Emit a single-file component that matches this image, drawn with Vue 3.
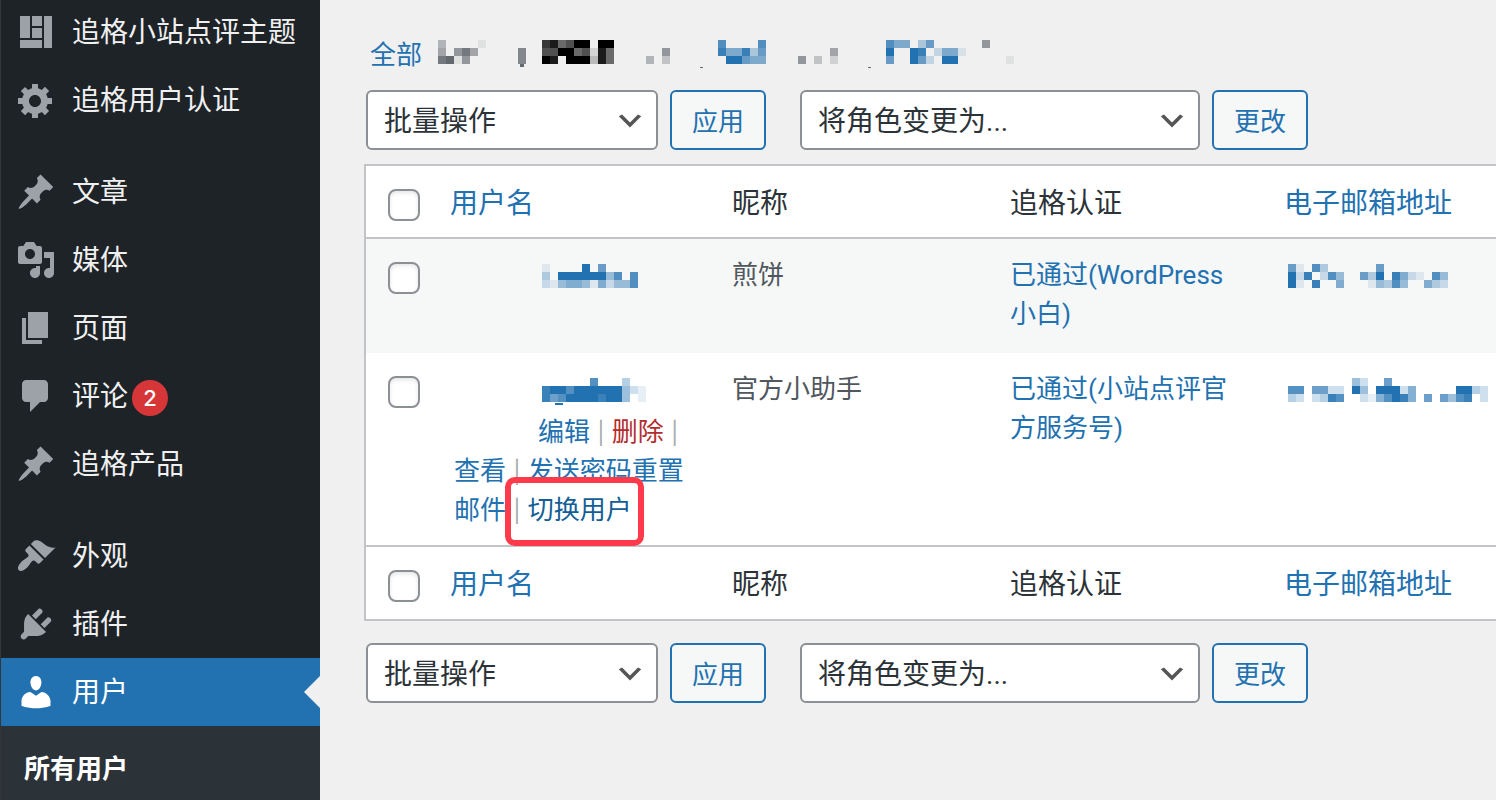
<template>
  <div class="admin">
    <nav class="sidebar" aria-label="主菜单">
      <ul class="menu">
        <li
          v-for="item in menu"
          :key="item.label"
          :class="{ 'group-start': item.groupStart, current: item.current }"
        >
          <a href="#" class="menu-link">
            <svg class="menu-icon" viewBox="0 0 20 20" aria-hidden="true">
              <path :d="item.icon" />
            </svg>
            <span class="menu-name">{{ item.label }}</span>
            <span v-if="item.count" class="badge">{{ item.count }}</span>
          </a>
        </li>
      </ul>
      <ul class="submenu">
        <li><a href="#">所有用户</a></li>
      </ul>
    </nav>

    <main class="content">
      <ul class="filters">
        <li><a href="#">全部</a></li>
        <li v-for="(f, i) in filters" :key="i" :class="['filter-mask', f.tone]">
          <Mosaic :rows="f.rows" :marks="f.marks" />
        </li>
      </ul>

      <div class="toolbar">
        <div class="actions">
          <div class="select-wrap bulk">
            <select v-model="bulkAction" aria-label="批量操作">
              <option value="">批量操作</option>
              <option value="delete">删除</option>
            </select>
            <svg viewBox="0 0 20 20" aria-hidden="true"><path :d="chevron" /></svg>
          </div>
          <button type="button">应用</button>
        </div>
        <div class="actions">
          <div class="select-wrap role">
            <select v-model="newRole" aria-label="将角色变更为">
              <option value="">将角色变更为...</option>
              <option value="subscriber">订阅者</option>
            </select>
            <svg viewBox="0 0 20 20" aria-hidden="true"><path :d="chevron" /></svg>
          </div>
          <button type="button">更改</button>
        </div>
      </div>

      <table class="users">
        <thead>
          <tr>
            <td class="check"><input type="checkbox" aria-label="全选" /></td>
            <th scope="col" class="sortable"><a href="#">用户名</a></th>
            <th scope="col">昵称</th>
            <th scope="col">追格认证</th>
            <th scope="col" class="sortable email"><a href="#">电子邮箱地址</a></th>
          </tr>
        </thead>
        <tbody>
          <tr v-for="user in users" :key="user.nickname">
            <th scope="row" class="check">
              <input type="checkbox" :aria-label="'选择' + user.nickname" />
            </th>
            <td>
              <span class="avatar"></span>
              <a href="#" class="mask name" :aria-label="user.nickname">
                <Mosaic :rows="user.name" :marks="user.marks" />
              </a>
              <div v-if="user.showActions" class="row-actions">
                <a href="#">编辑</a><span class="sep"> | </span
                ><a href="#" class="delete">删除</a><span class="sep"> | </span
                ><a href="#">查看</a><span class="sep"> | </span
                ><a href="#">发送密码重置邮件</a><span class="sep"> | </span
                ><a href="#" class="switch">切换用户</a>
              </div>
            </td>
            <td>{{ user.nickname }}</td>
            <td><a href="#">{{ user.verified }}</a></td>
            <td class="email">
              <a href="#" class="mask" aria-label="电子邮箱"><Mosaic :rows="user.email" /></a>
            </td>
          </tr>
        </tbody>
        <tfoot>
          <tr>
            <td class="check"><input type="checkbox" aria-label="全选" /></td>
            <th scope="col" class="sortable"><a href="#">用户名</a></th>
            <th scope="col">昵称</th>
            <th scope="col">追格认证</th>
            <th scope="col" class="sortable email"><a href="#">电子邮箱地址</a></th>
          </tr>
        </tfoot>
      </table>

      <div class="toolbar bottom">
        <div class="actions">
          <div class="select-wrap bulk">
            <select v-model="bulkAction" aria-label="批量操作">
              <option value="">批量操作</option>
              <option value="delete">删除</option>
            </select>
            <svg viewBox="0 0 20 20" aria-hidden="true"><path :d="chevron" /></svg>
          </div>
          <button type="button">应用</button>
        </div>
        <div class="actions">
          <div class="select-wrap role">
            <select v-model="newRole" aria-label="将角色变更为">
              <option value="">将角色变更为...</option>
              <option value="subscriber">订阅者</option>
            </select>
            <svg viewBox="0 0 20 20" aria-hidden="true"><path :d="chevron" /></svg>
          </div>
          <button type="button">更改</button>
        </div>
      </div>
    </main>
  </div>
</template>

<script setup>
import { h, ref } from "vue";

const bulkAction = ref("");
const newRole = ref("");

const chevron = "M5 6l5 5 5-5 2 1-7 7-7-7 2-1z";

// Pixelated private text: one digit per 8px cell, 9 is solid and "." is empty
const CELL = 8;
const Mosaic = ({ rows, marks = [] }) => {
  const width = rows[0].length * CELL;
  const height = rows.length * CELL;
  const cells = rows.flatMap((row, y) =>
    [...row].map((c, x) =>
      c === "."
        ? null
        : h("rect", {
            x: x * CELL,
            y: y * CELL,
            width: CELL,
            height: CELL,
            "fill-opacity": c / 9,
          })
    )
  );
  const extra = marks.map(([x, y, w, hh]) => h("rect", { x, y, width: w, height: hh }));
  return h(
    "svg",
    { width, height, fill: "currentColor", overflow: "visible", "shape-rendering": "crispEdges" },
    [...cells, ...extra]
  );
};
Mosaic.props = ["rows", "marks"];

const icons = {
  layout:
    "M2 2h5v11H2V2zm6 0h5v5H8V2zm6 0h4v16h-4V2zM8 8h5v5H8V8zm-6 6h11v4H2v-4z",
  gear: "M18 12h-2.18c-.17.7-.44 1.35-.81 1.93l1.54 1.54-2.1 2.1-1.54-1.54c-.58.36-1.23.63-1.91.79V19H8v-2.18c-.68-.16-1.33-.43-1.91-.79l-1.54 1.54-2.12-2.12 1.54-1.54c-.36-.58-.63-1.23-.79-1.91H1V9.03h2.17c.16-.7.44-1.35.8-1.94L2.43 5.55l2.1-2.1 1.54 1.54c.58-.37 1.24-.64 1.93-.81V2h3v2.18c.68.16 1.33.43 1.91.79l1.54-1.54 2.12 2.12-1.54 1.54c.36.59.64 1.24.8 1.94H18V12zm-8.5 1.5c1.66 0 3-1.34 3-3s-1.34-3-3-3-3 1.34-3 3 1.34 3 3 3z",
  pin: "M10.44 3.02l1.82-1.82 6.36 6.35-1.83 1.82c-1.05-.68-2.48-.57-3.41.36l-.75.75c-.92.93-1.04 2.35-.35 3.41l-1.83 1.82-2.41-2.41-2.8 2.79c-.42.42-3.38 2.71-3.8 2.29s1.86-3.39 2.28-3.81l2.79-2.79L4.1 9.36l1.83-1.82c1.05.69 2.48.57 3.4-.36l.75-.75c.93-.92 1.05-2.35.36-3.41z",
  media:
    "M13 11V4c0-.55-.45-1-1-1h-1.67L9 1H5L3.67 3H2c-.55 0-1 .45-1 1v7c0 .55.45 1 1 1h10c.55 0 1-.45 1-1zM7 4.5c1.38 0 2.5 1.12 2.5 2.5S8.38 9.5 7 9.5 4.5 8.38 4.5 7 5.62 4.5 7 4.5zM14 6h5v10.5c0 1.38-1.12 2.5-2.5 2.5S14 17.88 14 16.5s1.12-2.5 2.5-2.5c.17 0 .34.02.5.05V9h-3V6zm-4 8.05V13h2v3.5c0 1.38-1.12 2.5-2.5 2.5S7 17.88 7 16.5 8.12 14 9.5 14c.17 0 .34.02.5.05z",
  page: "M6 15V2h10v13H6zm-1 1h8v2H3V5h2v11z",
  comment:
    "M5 2h9c1.1 0 2 .9 2 2v7c0 1.1-.9 2-2 2h-2l-5 5v-5H5c-1.1 0-2-.9-2-2V4c0-1.1.9-2 2-2z",
  brush:
    "M14.48 11.06L7.41 3.99l1.5-1.5c.5-.56 2.3-.47 3.51.32 1.21.8 1.43 1.28 2.91 2.1 1.18.64 2.45 1.26 4.45.85zm-.71.71L6.7 4.7 4.93 6.47c-.39.39-.39 1.02 0 1.41l1.06 1.06c.39.39.39 1.03 0 1.42-.6.6-1.43 1.11-2.21 1.69-.35.26-.7.53-1.01.84C1.43 14.23.4 16.08 1.4 17.07c.99 1 2.84-.03 4.18-1.36.31-.31.58-.66.85-1.02.57-.78 1.08-1.61 1.69-2.21.39-.39 1.02-.39 1.41 0l1.06 1.06c.39.39 1.02.39 1.41 0z",
  plug: "M13.11 4.36L9.87 7.6 8 5.73l3.24-3.24c.35-.34 1.05-.2 1.56.32.52.51.66 1.21.31 1.55zm-8 1.77l.91-1.12 9.01 9.01-1.19.84c-.71.71-2.63 1.16-3.82 1.16H6.14L4.9 17.26c-.59.59-1.54.59-2.12 0-.59-.58-.59-1.53 0-2.12l1.24-1.24v-3.88c0-1.13.4-3.19 1.09-3.89zm7.26 3.97l3.24-3.24c.34-.35 1.04-.21 1.55.31.52.51.66 1.21.31 1.55l-3.24 3.25z",
  user: "M10 9.25c-2.27 0-2.73-3.44-2.73-3.44C7 4.02 7.82 2 9.97 2c2.16 0 2.98 2.02 2.71 3.81 0 0-.41 3.44-2.68 3.44zm0 2.57L12.72 10c2.39 0 4.52 2.33 4.52 4.53v2.49s-3.65 1.13-7.24 1.13c-3.65 0-7.24-1.13-7.24-1.13v-2.49c0-2.25 1.94-4.48 4.47-4.48z",
};

const menu = [
  { label: "追格小站点评主题", icon: icons.layout },
  { label: "追格用户认证", icon: icons.gear },
  { label: "文章", icon: icons.pin, groupStart: true },
  { label: "媒体", icon: icons.media },
  { label: "页面", icon: icons.page },
  { label: "评论", icon: icons.comment, count: 2 },
  { label: "追格产品", icon: icons.pin },
  { label: "外观", icon: icons.brush, groupStart: true },
  { label: "插件", icon: icons.plug },
  { label: "用户", icon: icons.user, current: true },
];

const filters = [
  { tone: "gray", rows: ["4....1", "5.685.", "8916.."] },
  { tone: "gray", rows: ["...", "..7", "..7"], marks: [[18, 24, 4, 3]] },
  { tone: "black", rows: ["785699.99", "669956185", "98.999285"] },
  { tone: "gray", rows: [".....", "....6", "..4.3"], marks: [[70, 27, 3, 1]] },
  { tone: "blue", rows: ["....7....7", "....855836", ".....99655"] },
  { tone: "gray", rows: [".......", "......5", "..6.3.2"], marks: [[86, 27, 3, 1]] },
  { tone: "blue", rows: ["....755.36....", "....9..98.2551", "....6..962.99."] },
  { tone: "gray", rows: ["6...", "....", "...1"] },
];

const users = [
  {
    nickname: "煎饼",
    verified: "已通过(WordPress 小白)",
    name: ["1....9.6....", "3.99999947.7", "214554152447"],
    email: ["61.73......6........", "928.274..639.8521.74", "91.8..5...14374..532"],
  },
  {
    nickname: "官方小助手",
    verified: "已通过(小站点评官方服务号)",
    name: ["......7...3..", "8997999999421", "86799998994.1"],
    marks: [[13, 25, 8, 2]],
    email: [
      "........42..6............",
      "77.6622.94.99925.....9932",
      "32.2387..2157985.6.6478.2",
    ],
    showActions: true,
  },
];
</script>

<style>
body {
  margin: 0;
  background: #f0f0f0;
}
</style>

<style scoped>
.admin {
  display: flex;
  min-height: 100vh;
  overflow: hidden;
  color: #2c3338;
  font-family: Roboto, "Noto Sans CJK SC", sans-serif;
  font-size: 26px;
  line-height: 39px;
}

ul {
  margin: 0;
  padding: 0;
  list-style: none;
}

a {
  color: #2271b1;
  text-decoration: none;
}

/* Sidebar */
.sidebar {
  display: flex;
  flex-direction: column;
  flex: none;
  width: 320px;
  box-sizing: border-box;
  border-left: 1px solid #32373c;
  background: #1d2327;
}

.menu {
  margin-top: -2px;
}

.group-start {
  margin-top: 24px;
}

.menu-link {
  display: flex;
  align-items: center;
  height: 68px;
  padding-left: 15px;
  color: #f0f0f1;
  font-size: 28px;
}

.menu-icon {
  width: 40px;
  height: 40px;
  margin-right: 16px;
  fill: #9ca2a7;
}

.menu-name {
  padding-top: 1px;
}

.badge {
  width: 36px;
  height: 36px;
  margin-top: 3px;
  margin-left: 4px;
  border-radius: 50%;
  background: #d63638;
  color: #fff;
  font-family: Inter, sans-serif;
  font-size: 22px;
  font-weight: 500;
  line-height: 36px;
  text-align: center;
}

.current {
  position: relative;
  background: #2271b1;
}

.current .menu-link {
  color: #fff;
}

.current .menu-icon {
  fill: #fff;
}

.current::after {
  content: "";
  position: absolute;
  top: 18px;
  right: 0;
  border: 16px solid transparent;
  border-left-width: 0;
  border-right-color: #f0f0f0;
}

.submenu {
  flex: 1;
  padding: 15px 0;
  background: #2c3338;
}

.submenu a {
  display: block;
  padding: 10px 23px;
  color: #fff;
  font-weight: 600;
  line-height: 36px;
}

/* Content */
.content {
  flex: 1;
  min-width: 0;
  padding: 36px 0 40px 44px;
}

.filters {
  display: flex;
  gap: 16px;
  height: 38px;
  margin-bottom: 16px;
  padding-left: 6px;
}

.filter-mask {
  padding-top: 4px;
  line-height: 0;
}

.gray {
  color: #646970;
}

.black {
  color: #000;
}

.blue {
  color: #2271b1;
}

.toolbar {
  display: flex;
  flex-wrap: wrap;
  gap: 12px 34px;
  margin-bottom: 14px;
  padding-left: 2px;
}

.toolbar.bottom {
  margin-top: 22px;
}

.actions {
  display: flex;
  gap: 12px;
}

.select-wrap {
  position: relative;
}

.bulk {
  width: 292px;
}

.role {
  width: 400px;
}

.select-wrap svg {
  position: absolute;
  top: 15px;
  right: 12px;
  width: 32px;
  height: 32px;
  fill: #555;
  pointer-events: none;
}

select {
  width: 100%;
  height: 60px;
  padding: 2px 48px 0 16px;
  border: 2px solid #8c8f94;
  border-radius: 6px;
  background: #fff;
  color: #2c3338;
  font-family: inherit;
  font-size: 28px;
  appearance: none;
}

button {
  height: 60px;
  padding: 0 20px 2px;
  border: 2px solid #2271b1;
  border-radius: 6px;
  background: #f6f7f7;
  color: #2271b1;
  font-family: inherit;
  font-size: 26px;
  cursor: pointer;
}

/* Users table */
.users {
  width: 100%;
  border: 2px solid #c3c4c7;
  border-right: 0;
  border-spacing: 0;
  background: #fff;
  table-layout: fixed;
}

.users th,
.users td {
  width: 278px;
  box-sizing: border-box;
  padding: 17px 20px 15px;
  font-weight: 400;
  text-align: left;
  vertical-align: top;
}

.users .email {
  width: auto;
  padding-right: 0;
  white-space: nowrap;
}

.users .check {
  width: 68px;
  padding: 23px 0 0 22px;
  line-height: 0;
}

.users .sortable {
  padding-left: 16px;
}

.users thead th,
.users tfoot th {
  padding-top: 18px;
  padding-bottom: 14px;
  font-size: 28px;
}

.users tfoot th {
  padding-bottom: 15px;
}

thead th,
thead td {
  border-bottom: 2px solid #c3c4c7;
}

tfoot th,
tfoot td {
  border-top: 2px solid #c3c4c7;
}

tbody tr {
  height: 114px;
}

tbody tr:nth-child(odd) {
  background: #f6f7f7;
}

tbody td {
  color: #50575e;
}

input[type="checkbox"] {
  width: 32px;
  height: 32px;
  margin: 0;
  border: 2px solid #8c8f94;
  border-radius: 8px;
  background: #fff;
  box-shadow: inset 0 2px 4px rgba(0, 0, 0, 0.1);
  appearance: none;
}

input[type="checkbox"]:checked {
  background: #2271b1;
}

.avatar {
  float: left;
  width: 64px;
  height: 64px;
  margin-right: 20px;
}

.mask {
  display: flex;
  align-items: center;
  height: 39px;
}

.name {
  padding-left: 4px;
}

.row-actions {
  padding-top: 4px;
}

.sep {
  padding: 0 1px;
  color: #a7aaad;
  font-family: Inter, sans-serif;
  font-size: 22px;
  line-height: 1;
}

.delete {
  color: #b32d2e;
}

.switch {
  position: relative;
  display: inline-block;
  color: #135e96;
}

/* Red frame around the highlighted action */
.switch::after {
  content: "";
  position: absolute;
  inset: -14px -12px -16px -23px;
  border: 6px solid #ff3b4b;
  border-radius: 10px;
}
</style>
